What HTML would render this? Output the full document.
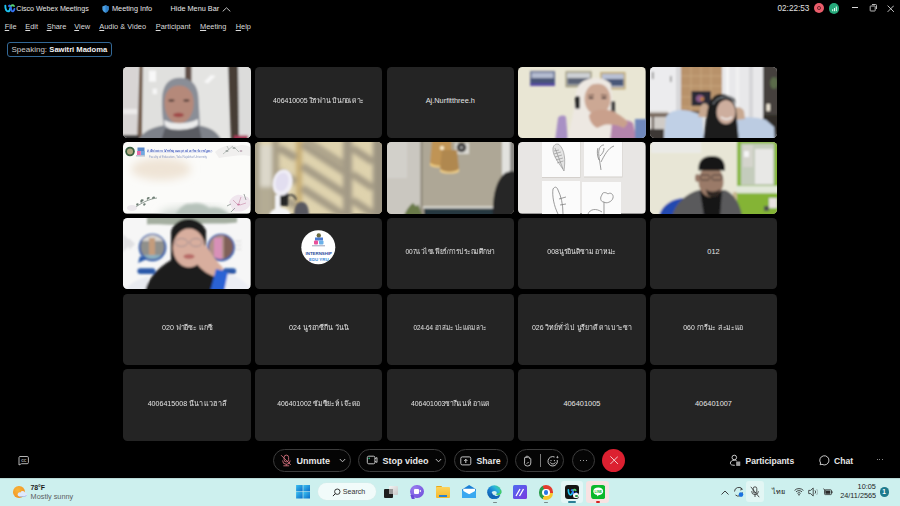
<!DOCTYPE html>
<html><head><meta charset="utf-8">
<style>
*{margin:0;padding:0;box-sizing:border-box}
html,body{width:900px;height:506px;overflow:hidden;background:#000}
body{position:relative;font-family:"Liberation Sans",sans-serif;color:#e6e6e6}
.a{position:absolute}
.t{white-space:nowrap}
.tile{position:absolute;width:127.6px;height:71.6px;border-radius:4.5px;background:#242424;overflow:hidden}
.nm{position:absolute;left:0;right:0;top:29.5px;text-align:center;font-size:7.4px;color:#e4e4e4;white-space:nowrap;line-height:10px}
.pill{position:absolute;top:448.6px;height:23.3px;border:1px solid #3c3c3c;border-radius:12px;background:#050505}
.bt{position:absolute;font-size:9px;font-weight:700;color:#e8e8e8;white-space:nowrap;line-height:10px}
.menu span{position:absolute;top:21.7px;font-size:7.4px;color:#dcdcdc;white-space:nowrap;line-height:10px}
.menu u{text-decoration:underline;text-underline-offset:1px}
</style></head><body>

<!-- title bar -->
<svg class="a" style="left:2px;top:1px" width="14" height="13" viewBox="0 0 14 13"><path d="M3.3 4.6 C3.2 8.8 4.6 10.4 6 10.4 C7.3 10.4 8 9 8.3 7" fill="none" stroke="#1ec4f2" stroke-width="1.9" stroke-linecap="round"/><path d="M7 5 C7.6 4.4 8.2 4.4 8.6 5.2 C9 6.4 8.8 8.4 9.6 9.6 C10.6 10.8 12.2 10.2 12.4 8" fill="none" stroke="#3470f0" stroke-width="1.9" stroke-linecap="round"/><path d="M9.2 4.8 C10 4 11.2 4 12 5" fill="none" stroke="#55d070" stroke-width="1.9" stroke-linecap="round"/></svg>
<div class="a t" style="left:16.3px;top:4px;font-size:7.1px;line-height:10px;color:#e8e8e8">Cisco Webex Meetings</div>
<svg class="a" style="left:101.5px;top:5px" width="7" height="8" viewBox="0 0 7 8"><path d="M3.5 0.3 L6.7 1.4 L6.6 4.2 C6.4 6 5 7.2 3.5 7.8 C2 7.2 0.6 6 0.4 4.2 L0.3 1.4 Z" fill="#4a9ee0"/><path d="M3.5 0.3 L6.7 1.4 L6.6 4.2 C6.4 6 5 7.2 3.5 7.8 Z" fill="#2f7fc8"/></svg>
<div class="a t" style="left:112px;top:4.2px;font-size:7.3px;line-height:10px;color:#e8e8e8">Meeting Info</div>
<div class="a t" style="left:170.5px;top:4.2px;font-size:7.3px;line-height:10px;color:#e8e8e8">Hide Menu Bar</div>
<svg class="a" style="left:222px;top:7.2px" width="9" height="5" viewBox="0 0 9 5"><path d="M0.7 4.4 L4.5 0.8 L8.3 4.4" fill="none" stroke="#d8d8d8" stroke-width="0.9"/></svg>

<div class="a t" style="left:777.5px;top:4px;font-size:8.2px;line-height:10px;color:#e0e0e0">02:22:53</div>
<div class="a" style="left:814px;top:3.2px;width:10.2px;height:10.2px;border-radius:50%;background:#ea5d6b"></div>
<div class="a" style="left:817.2px;top:6.4px;width:3.8px;height:3.8px;border-radius:50%;border:1px solid #6a2028"></div>
<div class="a" style="left:828.5px;top:3.2px;width:10.4px;height:10.4px;border-radius:50%;background:#25a97a"></div>
<svg class="a" style="left:830.5px;top:5px" width="7" height="7" viewBox="0 0 7 7"><rect x="1.2" y="4.2" width="1" height="2" fill="#e8fff4"/><rect x="3" y="3" width="1" height="3.2" fill="#e8fff4"/><rect x="4.8" y="1.5" width="1" height="4.7" fill="#e8fff4"/></svg>
<div class="a" style="left:852.4px;top:7.3px;width:6px;height:0.8px;background:#d8d8d8"></div>
<svg class="a" style="left:869px;top:3px" width="9" height="9" viewBox="0 0 9 9"><rect x="1.2" y="3" width="5" height="5" rx="0.5" fill="none" stroke="#d8d8d8" stroke-width="0.85"/><path d="M3 1.5 H6.6 A0.9 0.9 0 0 1 7.5 2.4 V6" fill="none" stroke="#d8d8d8" stroke-width="0.85"/></svg>
<svg class="a" style="left:886.5px;top:4.5px" width="7.5" height="7.5" viewBox="0 0 7.5 7.5"><path d="M0.6 0.6 L6.9 6.9 M6.9 0.6 L0.6 6.9" stroke="#d8d8d8" stroke-width="0.9"/></svg>

<!-- menu -->
<div class="menu">
<span style="left:4.7px"><u>F</u>ile</span>
<span style="left:25.3px"><u>E</u>dit</span>
<span style="left:46.7px"><u>S</u>hare</span>
<span style="left:74.3px"><u>V</u>iew</span>
<span style="left:99.3px"><u>A</u>udio &amp; Video</span>
<span style="left:155.7px"><u>P</u>articipant</span>
<span style="left:200px"><u>M</u>eeting</span>
<span style="left:235.7px"><u>H</u>elp</span>
</div>

<!-- speaking -->
<div class="a" style="left:6.9px;top:42.3px;width:104.8px;height:15.1px;border:1px solid #336896;border-radius:3px"></div>
<div class="a t" style="left:11.5px;top:45px;font-size:8px;line-height:10px;color:#cfcfcf">Speaking: <span style="color:#f2f2f2;font-weight:700;font-size:7.6px">Sawitri Madoma</span></div>

<!-- GRID -->
<div id="grid">
<div class="tile" style="left:123.3px;top:66.7px" id="t00"><svg width="127.6" height="71.6" viewBox="0 0 127.6 71.6" style="position:absolute;left:0;top:0"><defs><filter id="b0" x="-10%" y="-10%" width="120%" height="120%"><feGaussianBlur stdDeviation="0.9"/></filter></defs><rect width="127.6" height="71.6" fill="#dfdfdd"/><g filter="url(#b0)"><rect x="-2" y="-2" width="17" height="76" fill="#d8d5d4"/><rect x="0" y="42" width="14" height="5" fill="#ecebea"/><rect x="20" y="-2" width="42" height="76" fill="#e0e0de"/><rect x="68" y="-2" width="37" height="76" fill="#e4e4e2"/><rect x="115" y="-2" width="15" height="76" fill="#dcdcdb"/><path d="M16.5 -2 H20 L18.8 74 H14.2 Z" fill="#735e50"/><rect x="26" y="3.6" width="7" height="11" fill="#f8f8f8"/><rect x="29.6" y="21.6" width="4.4" height="5.6" fill="#f6f6f6"/><path d="M81 15 L88 8 L92.5 9 L85 16.6 Z" fill="#f8f8f8"/><path d="M62 -2 H68.5 L68.5 16 H62 Z" fill="#5e4e44"/><path d="M105 -2 H115 L116 74 H108 Z" fill="#463c36"/><path d="M15 74 C20 64 30 60 40 58.5 L76 58.5 C86 60 94 64 99 74 Z" fill="#7e828a"/><path d="M57 10.8 C46 10.8 39.5 18 39 32 C38.6 44 40 56 42 64 L77 64 C77 52 76 42 75.5 31 C75 18 68 10.8 57 10.8 Z" fill="#8a8e97"/><path d="M56 18.5 C48 18.5 42 24 41.5 34 C41 46 47 56.5 56 56.5 C65 56.5 71 47 70.7 35 C70.5 24 64 18.5 56 18.5 Z" fill="#b5897a"/><path d="M43 26 C46 20 52 17.5 57 17.5 C63 17.5 68 20 70.5 26 L70.5 20 C66 13 47 13 43 20 Z" fill="#8a8e97"/><ellipse cx="55.5" cy="48" rx="5.5" ry="2.2" fill="#a04a48"/><ellipse cx="48.5" cy="33.5" rx="3.2" ry="1.1" fill="#3a2a28"/><ellipse cx="63.5" cy="33.5" rx="3.2" ry="1.1" fill="#3a2a28"/><path d="M41 53 C48 57 64 58 75 52 L75 58 C68 62 62 64 57 64 C50 64 45 61 42 58.5 Z" fill="#ebebeb"/><path d="M42 61 C48 63.5 66 63.5 76 59 L79 74 H38 Z" fill="#5a5c62"/><rect x="111" y="68.5" width="14" height="5" fill="#a83858"/><rect x="-2" y="68" width="18" height="6" fill="#3a3a3a"/></g></svg></div>
<div class="tile" style="left:254.9px;top:66.7px"><div class="nm"><span style="display:inline-block;transform:scaleX(0.939)">406410005 อิรฟาน บินกอเดาะ</span></div></div>
<div class="tile" style="left:386.5px;top:66.7px"><div class="nm"><span>Aj.Nurfitthree.h</span></div></div>
<div class="tile" style="left:518.1px;top:66.7px" id="t03"><svg width="127.6" height="71.6" viewBox="0 0 127.6 71.6" style="position:absolute;left:0;top:0"><defs><filter id="b3" x="-10%" y="-10%" width="120%" height="120%"><feGaussianBlur stdDeviation="0.9"/></filter></defs><rect width="127.6" height="71.6" fill="#e9e6d4"/><g filter="url(#b3)"><rect x="12.3" y="4.3" width="24.5" height="14.5" fill="#3a4878"/><rect x="13.5" y="5.5" width="22" height="6" fill="#b4bcd0"/><rect x="13.5" y="11" width="22" height="5" fill="#4a5478"/><rect x="12.3" y="16.5" width="24.5" height="2.3" fill="#5a48a8"/><rect x="47.6" y="4.3" width="26" height="15.9" fill="#9a9478"/><rect x="49" y="5.8" width="23" height="12.5" fill="#cdd0d4"/><rect x="49.5" y="11" width="22" height="6.5" fill="#5a6274"/><rect x="82.3" y="5" width="25.2" height="17.4" fill="#c0aa78"/><rect x="84" y="6.8" width="21.8" height="13.6" fill="#b8c0d4"/><rect x="84.5" y="12" width="21" height="7" fill="#4a5878"/><path d="M37 74 L40 51 C42 48 46 48 48 50 L50 74 Z" fill="#a890c4"/><path d="M49 74 C52 60 56 46 57.5 30 C58.5 18 64 11.5 76 11.5 C87 11.5 93 18 94 28 L96 50 L97 74 Z" fill="#ede8e2"/><ellipse cx="79.5" cy="32" rx="13" ry="16" fill="#cca894"/><path d="M65 25 C68 15 88 13 93 25 L93 17 C86 9 70 9 65 17 Z" fill="#ede8e2"/><path d="M70 28.5 L76 28 M83 28 L89 28.5" stroke="#5a4038" stroke-width="1"/><ellipse cx="73" cy="31" rx="2.8" ry="0.9" fill="#3a2a2a"/><ellipse cx="86" cy="31" rx="2.8" ry="0.9" fill="#3a2a2a"/><rect x="57" y="29" width="5" height="13" rx="2.5" fill="#2a2a2a"/><rect x="93" y="34" width="4" height="11" rx="2" fill="#404040"/><path d="M96 42 C98 46 98 50 96 52" stroke="#505050" stroke-width="0.8" fill="none"/><path d="M92 74 L94 56 C101 52 110 52 115 56 L119 74 Z" fill="#b484ac"/><path d="M71 48 C76 42 88 41 96 45 C102 48 108 52 110 56 L106 61 C100 58 92 57 86 58 L79 61 C74 58 71 53 71 48 Z" fill="#c9a08c"/><rect x="117" y="52" width="12" height="22" fill="#7088bc"/></g></svg></div>
<div class="tile" style="left:649.7px;top:66.7px" id="t04"><svg width="127.6" height="71.6" viewBox="0 0 127.6 71.6" style="position:absolute;left:0;top:0"><defs><filter id="b4" x="-10%" y="-10%" width="120%" height="120%"><feGaussianBlur stdDeviation="1"/></filter></defs><rect width="127.6" height="71.6" fill="#e0e0e0"/><g filter="url(#b4)"><rect x="-2" y="-2" width="33" height="76" fill="#ececee"/><rect x="2" y="5" width="1.5" height="7" fill="#7a7a7a"/><rect x="20" y="9" width="1.5" height="6" fill="#8a8a8a"/><rect x="26" y="-2" width="5" height="48" fill="#d8d8da"/><rect x="-2" y="44" width="20" height="30" fill="#d0ccc8"/><rect x="-2" y="46" width="22" height="4" fill="#7a6a5e"/><rect x="2" y="50" width="2" height="16" fill="#5a4a40"/><rect x="-2" y="62" width="16" height="12" fill="#3e3834"/><rect x="31" y="-2" width="41" height="48" fill="#b8926a"/><path d="M31 9 H72 M31 19 H72 M31 30 H72 M31 40 H72 M41 -2 V46 M51 -2 V46 M61 -2 V46" stroke="#d0ae86" stroke-width="0.7"/><rect x="41.5" y="24" width="19.5" height="15" fill="#2c2c36"/><ellipse cx="50" cy="31.5" rx="4" ry="3.5" fill="#8a5a8a"/><ellipse cx="52" cy="32" rx="2" ry="2" fill="#c08040"/><rect x="31" y="44" width="20" height="10" fill="#6a5a4a"/><rect x="72" y="-2" width="41" height="76" fill="#e8e8ea"/><rect x="76" y="-2" width="3" height="76" fill="#f6f6f6"/><rect x="86" y="-2" width="3" height="76" fill="#f2f2f2"/><rect x="99" y="-2" width="4" height="76" fill="#d6d6d8"/><rect x="113" y="-2" width="17" height="76" fill="#44403c"/><ellipse cx="124" cy="16" rx="4" ry="6" fill="#5a6a48"/><rect x="116.5" y="37" width="3.5" height="7" fill="#f0e8d8"/><rect x="113" y="48" width="17" height="26" fill="#2e2a28"/><path d="M14 74 L16 50 C20 43 30 42 40 44 L52 48 L54 74 Z" fill="#c0d0e6"/><path d="M85 74 L86 52 C95 49 108 50 116 53 L124 60 L125 74 Z" fill="#bccce2"/><path d="M48 50 L51 39 C53 35 57 36 58 39 L59 50 Z" fill="#c8a890"/><path d="M84 42 C87 39 92 40 94 44 L95 52 L86 53 Z" fill="#c8a890"/><path d="M53 74 L57 46 C59 34 63 27 71 27 C79 27 84 33 86 42 L89 74 Z" fill="#1e1e1e"/><ellipse cx="76" cy="45" rx="9.5" ry="12" fill="#cdae9e"/><path d="M65 38 C66 31 72 29 78 30 C82 31 85 34 86 38 L85 32 C80 27 68 27 64 34 Z" fill="#1e1e1e"/><path d="M63 37 C67 30 76 28 84 32" stroke="#a0a6ae" stroke-width="1" fill="none"/><path d="M71 50 C74 53 79 53 82 50" stroke="#f4f4f4" stroke-width="1.5" fill="none"/></g></svg></div>

<div class="tile" style="left:123.3px;top:142.3px" id="t10"><svg width="127.6" height="71.6" viewBox="0 0 127.6 71.6" style="position:absolute;left:0;top:0"><defs><filter id="b10" x="-30%" y="-30%" width="160%" height="160%"><feGaussianBlur stdDeviation="4"/></filter><filter id="b10m" x="-30%" y="-30%" width="160%" height="160%"><feGaussianBlur stdDeviation="1.8"/></filter><filter id="b10s" x="-10%" y="-10%" width="120%" height="120%"><feGaussianBlur stdDeviation="0.6"/></filter></defs><rect width="127.6" height="71.6" fill="#fbfbf9"/><ellipse cx="38" cy="27" rx="30" ry="11" fill="#efe4d6" filter="url(#b10)"/><ellipse cx="72" cy="73" rx="36" ry="8" fill="#d0d8d2" filter="url(#b10)"/><path d="M52 74 C56 66 62 61 68 62 C74 60 82 62 86 66 C94 64 102 67 108 74 Z" fill="#b6c2ba" filter="url(#b10m)"/><g filter="url(#b10s)"><circle cx="7" cy="9.5" r="4.8" fill="#3a6040"/><circle cx="7" cy="9.5" r="3" fill="#b0a880"/><rect x="14.5" y="5.5" width="7" height="3.5" fill="#5a88c8"/><rect x="14" y="9" width="3.8" height="4" fill="#e86aa8"/><rect x="18" y="9" width="3.8" height="4" fill="#70a8e0"/><rect x="13" y="13.5" width="9" height="0.8" fill="#8090b0"/><text x="24" y="9.6" font-size="3.6" font-weight="700" fill="#5068c4" font-family="Liberation Sans" textLength="65" lengthAdjust="spacingAndGlyphs">ฝ่ายฝึกประสบการณ์วิชาชีพครู คณะครุศาสตร์ มหาวิทยาลัยราชภัฏยะลา</text><rect x="24" y="10.6" width="65" height="0.35" fill="#b8c4e8"/><text x="26" y="15.6" font-size="3" fill="#8a98c4" font-family="Liberation Sans" textLength="58" lengthAdjust="spacingAndGlyphs">Faculty of Education, Yala Rajabhat University</text><path d="M10 67 C18 61 26 57 34 56" stroke="#6a7a70" stroke-width="0.7" fill="none"/><path d="M18 61 C16 58 19 56 21 58 Z M24 58 C23 55 26 54 27 56 Z M21 64 C19 62 21 60 23 62 Z M29 57 C29 54 32 54 32 56 Z M14 64 C12 62 14 60 16 62 Z" fill="#6e7e74"/><ellipse cx="9" cy="66" rx="5" ry="3" fill="#ece8ec"/><path d="M106 60 C110 52 118 51 121 55 C125 53 128 58 127 63 C125 68 118 71 110 69 Z" fill="#f0e6ee"/><path d="M114 62 L110 58 M116 61 L118 55 M117 63 L123 61" stroke="#d0a0b8" stroke-width="0.8"/><ellipse cx="115.5" cy="62.5" rx="1.5" ry="1" fill="#c87aa0"/><path d="M121 52 L123 58 M108 70 L112 66 M104 64 L108 62" stroke="#7a8480" stroke-width="0.7"/><path d="M92 10 C98 4 108 2 114 4 C118 2 124 3 127 5 L127 14 C120 12 108 14 96 16 Z" fill="#f0efee"/><path d="M100 12 L110 4 M106 8 L104 4 M112 6 L116 10" stroke="#9aa4a0" stroke-width="0.6"/><ellipse cx="104" cy="9" rx="1.6" ry="0.8" fill="#8a9490"/><ellipse cx="111" cy="6" rx="1.6" ry="0.8" fill="#8a9490"/><ellipse cx="118" cy="9" rx="1.4" ry="0.8" fill="#b098a8"/></g></svg></div>
<div class="tile" style="left:254.9px;top:142.3px" id="t11"><svg width="127.6" height="71.6" viewBox="0 0 127.6 71.6" style="position:absolute;left:0;top:0"><defs><filter id="b11" x="-10%" y="-10%" width="120%" height="120%"><feGaussianBlur stdDeviation="2"/></filter><filter id="b11s" x="-10%" y="-10%" width="120%" height="120%"><feGaussianBlur stdDeviation="0.8"/></filter></defs><rect width="127.6" height="71.6" fill="#dfd3ae"/><g filter="url(#b11)"><rect x="-4" y="-4" width="9" height="80" fill="#a8a08a"/><rect x="5" y="3" width="12" height="42" fill="#dcd8ca"/><rect x="4" y="45" width="14" height="30" fill="#b4ac94"/><rect x="17" y="-4" width="7" height="80" fill="#aaa088"/><rect x="41" y="-4" width="6" height="80" fill="#c8ae74"/><rect x="88" y="-4" width="9" height="80" fill="#a39a86"/><rect x="118" y="-4" width="14" height="80" fill="#9c9482"/><path d="M47 2 L90 30 M47 24 L90 52 M47 46 L90 74 M97 6 L118 20 M97 32 L118 46 M97 58 L118 72 M24 6 L41 16 M24 30 L41 40 M24 54 L41 64" stroke="#a69c86" stroke-width="7.5"/><path d="M47 -6 L90 22" stroke="#a69c86" stroke-width="4"/></g><g filter="url(#b11s)"><rect x="20" y="53" width="6" height="14" fill="#f2f2f6"/><path d="M14 74 C15 68 20 66 26 66 C31 66 35 68 36 74 Z" fill="#f4f4f6"/><rect x="25" y="50" width="8" height="14" fill="#262626"/><path d="M32 54 C36 52 40 53 41 58" stroke="#2a2a2a" stroke-width="1.6" fill="none"/><ellipse cx="27.5" cy="40.5" rx="10" ry="13.5" transform="rotate(14 27.5 40.5)" fill="#f0eef6"/><ellipse cx="27" cy="40" rx="6.5" ry="9.5" transform="rotate(14 27 40)" fill="#e2def0"/><path d="M39 74 C39 64 42 60 46.5 60 C51 60 54 64 54 74 Z" fill="#585860"/></g></svg></div>
<div class="tile" style="left:386.5px;top:142.3px" id="t12"><svg width="127.6" height="71.6" viewBox="0 0 127.6 71.6" style="position:absolute;left:0;top:0"><defs><filter id="b12" x="-10%" y="-10%" width="120%" height="120%"><feGaussianBlur stdDeviation="1"/></filter></defs><rect width="127.6" height="71.6" fill="#aea796"/><g filter="url(#b12)"><rect x="-2" y="-2" width="36" height="76" fill="#cac7c0"/><rect x="-2" y="-2" width="22" height="38" fill="#d2d0ca"/><rect x="33.5" y="-2" width="2" height="76" fill="#8a8474"/><rect x="36" y="-2" width="79" height="76" fill="#aea796"/><rect x="115" y="-2" width="9" height="76" fill="#e2e2de"/><rect x="123" y="-2" width="7" height="45" fill="#8c8a86"/><rect x="68" y="1" width="14" height="11" fill="#dcdad4"/><circle cx="74.5" cy="5.5" r="4.8" fill="#383838"/><circle cx="74.5" cy="5.5" r="1.6" fill="#a8a8a8"/><path d="M45 -2 H64 L65.5 21 C65 25 44 25 43 21 Z" fill="#c09454"/><path d="M43 20 C44 25 65 25 65.5 20 L65.5 23 C65 26.5 44 26.5 43 23 Z" fill="#f0cc80"/><path d="M55 8 H70 L72 27 C71 31 54 31 53 27 Z" fill="#b08850"/><path d="M53 26 C54 31 71 31 72 26 L72 29 C71 32.5 54 32.5 53 29 Z" fill="#f2d088"/><circle cx="55" cy="6" r="2" fill="#fff2d0"/><rect x="36" y="64.5" width="74" height="2" fill="#e6e6e2"/><rect x="37" y="66.5" width="73" height="8" fill="#263840"/><path d="M17 74 C19 68 23 63 26 61 C28 63 30 66 31 62 C33 66 34 70 35 74 Z" fill="#6a7a4a"/><path d="M106 74 C105 54 109 38 118 31 C122 29 126 29 130 30 V74 Z" fill="#262626"/></g></svg></div>
<div class="tile" style="left:518.1px;top:142.3px" id="t13"><svg width="127.6" height="71.6" viewBox="0 0 127.6 71.6" style="position:absolute;left:0;top:0"><defs><filter id="b13" x="-10%" y="-10%" width="120%" height="120%"><feGaussianBlur stdDeviation="0.6"/></filter></defs><rect width="127.6" height="71.6" fill="#e8e6e4"/><g filter="url(#b13)"><rect x="24" y="-2" width="38.5" height="38" fill="#d4d0cc"/><rect x="24" y="-2" width="38" height="37" fill="#fbfbfb"/><rect x="66" y="-2" width="38.5" height="37.5" fill="#d4d0cc"/><rect x="66" y="-2" width="38" height="36.5" fill="#fbfbfb"/><rect x="24" y="39" width="38" height="35" fill="#fbfbfb"/><rect x="64" y="40" width="39" height="34" fill="#fbfbfb"/><path d="M46 29 C42 22 34 14 35 6 C36 2 39 1.5 41 2.5 C47 8 47.5 18 46 29 Z" fill="#e4e4e4" stroke="#8a8a8a" stroke-width="0.6"/><path d="M37 6 L45 27 M36 9 L41 8 M36 12 L43 10 M37 15 L44 13 M38 18 L45 16 M39 21 L45.5 19" stroke="#7a7a7a" stroke-width="0.5"/><path d="M83 28 C82 20 80 12 81 8 C82 4 84 3 86 3 M83 20 C86 14 90 6 96 4 M81 18 C79 14 79 8 80 6 M82 14 C84 12 86 10 86 6" fill="none" stroke="#7a7a7a" stroke-width="0.75"/><path d="M35 47 C37 44 39 45 40 48 C43 54 45 62 45 72 M35 47 C34 54 36 64 40 72 M41 57 L48 55 M42 63 L48 62" fill="none" stroke="#7a7a7a" stroke-width="0.75"/><path d="M86 72 V60 M84 53 C84 50 88 50 90 52 C92 50 96 52 95 56 C94 60 88 62 86 60 C82 60 82 55 84 53 Z M70 72 C72 67 78 66 84 70" fill="none" stroke="#7a7a7a" stroke-width="0.75"/></g></svg></div>
<div class="tile" style="left:649.7px;top:142.3px" id="t14"><svg width="127.6" height="71.6" viewBox="0 0 127.6 71.6" style="position:absolute;left:0;top:0"><defs><filter id="b14" x="-10%" y="-10%" width="120%" height="120%"><feGaussianBlur stdDeviation="1"/></filter></defs><rect width="127.6" height="71.6" fill="#e2dfcc"/><g filter="url(#b14)"><rect x="-2" y="-2" width="89" height="76" fill="#e8e6d6"/><rect x="1" y="-2" width="50" height="13" fill="#eaeae6"/><rect x="87" y="-2" width="43" height="76" fill="#88b83c"/><rect x="91" y="1.5" width="33" height="42" fill="#c4ccbc"/><rect x="93" y="3" width="10" height="22" fill="#d4d4cc"/><rect x="94" y="9" width="5" height="6" fill="#f4f4f4"/><rect x="105" y="7" width="18" height="35" fill="#e8e8e6"/><rect x="86" y="44" width="44" height="7.5" fill="#e2e8da"/><rect x="86" y="51.5" width="44" height="22" fill="#84b436"/><rect x="119" y="56" width="8" height="10" fill="#e8e2e0"/><rect x="114" y="64" width="5" height="5" fill="#505050"/><rect x="83" y="50" width="4" height="24" fill="#c8b890"/><path d="M9 74 C12 63 22 56 36 56 L38 74 Z" fill="#2448b0"/><path d="M22 74 C25 62 36 51 49 48 L75 48 C84 51 90 62 92 74 Z" fill="#5a5a5c"/><path d="M50 49 L72 49 L70 74 L54 74 Z" fill="#161616"/><ellipse cx="61" cy="39.5" rx="12.5" ry="15.5" fill="#9a7a68"/><ellipse cx="47.5" cy="36" rx="2.5" ry="4" fill="#967666"/><path d="M48.5 28.5 C47.5 18 54 14 62 14 C70 14 75.5 18 75 28.5 Z" fill="#181818"/><rect x="50.5" y="33" width="9" height="5" rx="1.5" fill="none" stroke="#4a3a34" stroke-width="1"/><rect x="62" y="33" width="10" height="5" rx="1.5" fill="none" stroke="#4a3a34" stroke-width="1"/><path d="M56 47 C58 50 66 51 70 47 L69 53 C66 56 59 56 57 52 Z" fill="#2e2624"/></g></svg></div>

<div class="tile" style="left:123.3px;top:217.9px" id="t20"><svg width="127.6" height="71.6" viewBox="0 0 127.6 71.6" style="position:absolute;left:0;top:0"><defs><filter id="b20" x="-10%" y="-10%" width="120%" height="120%"><feGaussianBlur stdDeviation="0.9"/></filter></defs><rect width="127.6" height="71.6" fill="#f6f6f6"/><g filter="url(#b20)"><path d="M24 -2 H114 V4.5 C100 6.5 80 4.5 60 6.5 C45 7.5 35 5.5 24 6.5 Z" fill="#a4aea0"/><path d="M0 16 L9 25 L0 34 Z M6 20 L12 26 L6 32 Z" fill="#e0e0e2"/><circle cx="29.5" cy="29.5" r="13.8" fill="#2a58a8"/><path d="M17 38 L15 45 L24 41 Z" fill="#2a58a8"/><clipPath id="c20a"><circle cx="29.5" cy="29" r="12"/></clipPath><clipPath id="c20b"><circle cx="98" cy="29" r="12"/></clipPath><g clip-path="url(#c20a)"><rect x="17" y="17" width="25" height="25" fill="#90908c"/><rect x="17" y="17" width="25" height="6" fill="#d8d4d0"/><rect x="26" y="20" width="6" height="21" fill="#c49c7c"/><rect x="17" y="37" width="25" height="5" fill="#8ab0c0"/></g><circle cx="98" cy="29.5" r="13.8" fill="#2a58a8"/><g clip-path="url(#c20b)"><rect x="85" y="17" width="26" height="25" fill="#b09088"/><rect x="91" y="20" width="8" height="22" fill="#d890b8"/><rect x="101" y="17" width="10" height="25" fill="#806058"/></g><rect x="14.4" y="50.2" width="18" height="5.8" rx="2.9" fill="#2a58a8"/><rect x="99.6" y="50.2" width="13.5" height="5.8" rx="2.9" fill="#2a58a8"/><circle cx="114" cy="23" r="0.6" fill="#909090"/><circle cx="117" cy="23" r="0.6" fill="#909090"/><circle cx="114" cy="27" r="0.6" fill="#909090"/><circle cx="117" cy="27" r="0.6" fill="#909090"/><circle cx="114" cy="31" r="0.6" fill="#909090"/><circle cx="117" cy="31" r="0.6" fill="#909090"/><path d="M2 74 C5 66 14 61 25 59 L25 74 Z" fill="#e8eaf0"/><path d="M100 74 L102 55 C110 56 121 62 127 70 V74 Z" fill="#eceef4"/><path d="M22 74 C24 62 34 50 48 42 L48 14 C50 5 58 1 66 1 C74 1 81 6 83 14 L83 46 C90 52 97 60 99 74 Z" fill="#1c1c1c"/><ellipse cx="66" cy="30" rx="16" ry="19.5" fill="#d8ae9e"/><path d="M49 22 C50 12 57 8 66 8 C75 8 82 12 83 22 L83 12 C78 4 54 4 49 12 Z" fill="#1c1c1c"/><ellipse cx="58.5" cy="24.5" rx="6.2" ry="4" fill="none" stroke="#9a8a8e" stroke-width="0.9"/><ellipse cx="73" cy="24.5" rx="6.2" ry="4" fill="none" stroke="#9a8a8e" stroke-width="0.9"/><ellipse cx="66" cy="38.5" rx="5.5" ry="2.4" fill="#b86c68"/><path d="M74 46 C76 40 78 30 81 27 C85 28 90 40 100 50 L96 60 C88 58 79 53 74 46 Z" fill="#d8ae9e"/><path d="M87 74 L93 51 L105 54 L101 74 Z" fill="#2a62d4"/></g></svg></div>
<div class="tile" style="left:254.9px;top:217.9px" id="t21"><svg width="127.6" height="71.6" viewBox="0 0 127.6 71.6" style="position:absolute;left:0;top:0"><circle cx="63.3" cy="29.2" r="17" fill="#ffffff"/><circle cx="63.8" cy="17.5" r="2.2" fill="#6a6a40"/><rect x="60" y="19.5" width="8" height="3" fill="#4a7ad0"/><rect x="59" y="22.5" width="4" height="4" rx="1" fill="#e8509a"/><rect x="64" y="22.5" width="4.5" height="4" rx="1" fill="#6ab0e8"/><rect x="57" y="27.3" width="13" height="1" fill="#9aa0b8"/><text x="63.8" y="37.2" font-size="4.4" font-weight="700" text-anchor="middle" fill="#2a4a9a" font-family="Liberation Sans">INTERNSHIP</text><text x="63.8" y="43" font-size="4.4" font-weight="700" text-anchor="middle" fill="#3a8ad8" font-family="Liberation Sans">EDU YRU</text></svg></div>
<div class="tile" style="left:386.5px;top:217.9px"><div class="nm"><span style="display:inline-block;transform:scaleX(0.892)">007แวไซเฟียร์/การประถมศึกษา</span></div></div>
<div class="tile" style="left:518.1px;top:217.9px"><div class="nm"><span style="display:inline-block;transform:scaleX(0.936)">008นูรอินติซาม อาหมะ</span></div></div>
<div class="tile" style="left:649.7px;top:217.9px"><div class="nm"><span>012</span></div></div>

<div class="tile" style="left:123.3px;top:293.5px"><div class="nm"><span style="display:inline-block;transform:scaleX(0.963)">020 ฟาอีซะ แกซี</span></div></div>
<div class="tile" style="left:254.9px;top:293.5px"><div class="nm"><span style="display:inline-block;transform:scaleX(0.967)">024 นูรอาซีกีน วันนิ</span></div></div>
<div class="tile" style="left:386.5px;top:293.5px"><div class="nm"><span style="display:inline-block;transform:scaleX(0.850)">024-64 อาสมะ ปะแดมลาะ</span></div></div>
<div class="tile" style="left:518.1px;top:293.5px"><div class="nm"><span style="display:inline-block;transform:scaleX(0.945)">026 วิทย์ทั่วไป นูรียาดี ดาเบาะซา</span></div></div>
<div class="tile" style="left:649.7px;top:293.5px"><div class="nm"><span style="display:inline-block;transform:scaleX(0.931)">060 การีมะ สะมะแอ</span></div></div>

<div class="tile" style="left:123.3px;top:369.1px"><div class="nm"><span style="display:inline-block;transform:scaleX(0.960)">4006415008 นีนา แวฮาลี</span></div></div>
<div class="tile" style="left:254.9px;top:369.1px"><div class="nm"><span style="display:inline-block;transform:scaleX(0.927)">406401002 ซัมซียะห์ เจ๊ะดอ</span></div></div>
<div class="tile" style="left:386.5px;top:369.1px"><div class="nm"><span style="display:inline-block;transform:scaleX(0.931)">406401003ซากีแนห์ อาแด</span></div></div>
<div class="tile" style="left:518.1px;top:369.1px"><div class="nm"><span>406401005</span></div></div>
<div class="tile" style="left:649.7px;top:369.1px"><div class="nm"><span>406401007</span></div></div>
</div>

<!-- bottom controls -->
<svg class="a" style="left:17px;top:455px" width="13" height="11" viewBox="0 0 13 11"><path d="M2.6 1.5 H10.2 A1.2 1.2 0 0 1 11.4 2.7 V7.5 A1.2 1.2 0 0 1 10.2 8.7 H4.5 L2 10 V2.7 A1.2 1.2 0 0 1 2.6 1.5 Z" fill="none" stroke="#c8c8c8" stroke-width="0.9"/><text x="6.8" y="6.6" font-size="3.6" text-anchor="middle" fill="#c8c8c8" font-family="Liberation Sans" font-weight="700">CC</text></svg>

<div class="pill" style="left:272.6px;width:78.2px"></div>
<div class="pill" style="left:358.4px;width:88px"></div>
<div class="pill" style="left:453.9px;width:54.3px"></div>
<div class="pill" style="left:515.1px;width:49.4px"></div>
<div class="pill" style="left:571.5px;width:23.6px"></div>
<div class="a" style="left:602.1px;top:448.6px;width:23.3px;height:23.3px;border-radius:50%;background:#dc2030"></div>
<svg class="a" style="left:609.5px;top:456.2px" width="8.4" height="8.4" viewBox="0 0 8.4 8.4"><path d="M0.4 0.4 L8 8 M8 0.4 L0.4 8" stroke="#f4dcdc" stroke-width="0.9"/></svg>

<div class="bt" style="left:296.5px;top:455.5px">Unmute</div>
<div class="bt" style="left:382.5px;top:455.5px">Stop video</div>
<div class="bt" style="left:476.5px;top:455.5px;font-size:8.7px">Share</div>
<div class="bt" style="left:745.5px;top:455.5px;font-size:8.5px">Participants</div>
<div class="bt" style="left:834px;top:455.5px;font-size:8.6px">Chat</div>



<!-- control icons -->
<svg class="a" style="left:280px;top:454px" width="12" height="13" viewBox="0 0 12 13"><rect x="4.1" y="1.1" width="4.5" height="6.8" rx="2.25" fill="none" stroke="#d4707e" stroke-width="0.9"/><path d="M2.6 6.5 A3.8 3.8 0 0 0 10.2 6.5 M6.4 10.3 V11.6 M3.4 11.8 H9.2" fill="none" stroke="#d4707e" stroke-width="0.9"/><path d="M1.1 1.2 L10.8 10.9" stroke="#d4707e" stroke-width="0.9"/></svg>
<svg class="a" style="left:339px;top:458px" width="7" height="5" viewBox="0 0 7 5"><path d="M0.8 1 L3.5 3.8 L6.2 1" fill="none" stroke="#cfcfcf" stroke-width="0.9"/></svg>
<svg class="a" style="left:366px;top:455px" width="12" height="10" viewBox="0 0 12 10"><rect x="1.3" y="1.2" width="7.6" height="7.6" rx="1.4" fill="none" stroke="#d8d8d8" stroke-width="0.9"/><path d="M9 3.6 L11 2.6 V7.4 L9 6.4" fill="none" stroke="#d8d8d8" stroke-width="0.9"/><circle cx="3.2" cy="3.4" r="0.8" fill="#22b07a"/></svg>
<svg class="a" style="left:435px;top:458px" width="7" height="5" viewBox="0 0 7 5"><path d="M0.8 1 L3.5 3.8 L6.2 1" fill="none" stroke="#cfcfcf" stroke-width="0.9"/></svg>
<svg class="a" style="left:460px;top:455.5px" width="12" height="10" viewBox="0 0 12 10"><rect x="0.8" y="0.9" width="10" height="8" rx="1.5" fill="none" stroke="#d8d8d8" stroke-width="0.9"/><path d="M5.8 7 V3.5 M4.2 5 L5.8 3.3 L7.4 5" fill="none" stroke="#e8e8e8" stroke-width="0.9"/></svg>
<svg class="a" style="left:523px;top:454.5px" width="9" height="12" viewBox="0 0 9 12"><path d="M1.6 6 V3 A0.8 0.8 0 0 1 3.2 3 V1.8 A0.8 0.8 0 0 1 4.8 1.8 V2.6 A0.8 0.8 0 0 1 6.4 2.6 V3.6 A0.8 0.8 0 0 1 7.8 3.8 V8 A3 3 0 0 1 4.8 11 H4.2 A2.8 2.8 0 0 1 1.4 8.4 Z" fill="none" stroke="#d8d8d8" stroke-width="0.85"/><path d="M3.6 8.8 C4.2 7.6 5.4 7.2 6 7.6" fill="none" stroke="#d8d8d8" stroke-width="0.7"/></svg>
<div class="a" style="left:539.8px;top:454px;width:0.8px;height:12.5px;background:#7a7a7a"></div>
<svg class="a" style="left:546.5px;top:454.5px" width="13" height="12" viewBox="0 0 13 12"><path d="M10.2 5 A4.7 4.7 0 1 1 7.6 2" fill="none" stroke="#d8d8d8" stroke-width="0.9"/><circle cx="4" cy="5.6" r="0.6" fill="#d8d8d8"/><circle cx="7.4" cy="5.6" r="0.6" fill="#d8d8d8"/><path d="M3.2 7.4 C4.2 9.4 7.4 9.4 8.4 7.4" fill="none" stroke="#d8d8d8" stroke-width="0.9"/><path d="M10.4 0.6 L10.8 1.8 L12 2.2 L10.8 2.6 L10.4 3.8 L10 2.6 L8.8 2.2 L10 1.8 Z" fill="#d8d8d8"/></svg>
<div class="a" style="left:579.8px;top:459.6px;width:1.3px;height:1.3px;border-radius:50%;background:#d0d0d0"></div>
<div class="a" style="left:582.7px;top:459.6px;width:1.3px;height:1.3px;border-radius:50%;background:#d0d0d0"></div>
<div class="a" style="left:585.6px;top:459.6px;width:1.3px;height:1.3px;border-radius:50%;background:#d0d0d0"></div>
<svg class="a" style="left:729px;top:454px" width="13" height="13" viewBox="0 0 13 13"><circle cx="5.3" cy="3.5" r="2.3" fill="none" stroke="#dcdcdc" stroke-width="0.9"/><path d="M7.6 6.6 C7 6.3 6.2 6.2 5.3 6.2 C3 6.2 1.4 7.4 1.4 9.2 C1.4 10.6 2.6 11.3 5.8 11.3" fill="none" stroke="#dcdcdc" stroke-width="0.9"/><rect x="7.2" y="7.6" width="4" height="4.2" fill="#bcbcbc"/><path d="M7.2 8.6 H11.2 M7.2 9.7 H11.2 M7.2 10.8 H11.2" stroke="#5a5a5a" stroke-width="0.35"/></svg>
<svg class="a" style="left:818px;top:454.5px" width="12" height="12" viewBox="0 0 12 12"><path d="M2.1 9.7 L2.6 8 A4.6 4.6 0 1 1 4 9.3 Z" fill="none" stroke="#dcdcdc" stroke-width="0.9" stroke-linejoin="round"/></svg>
<div class="a" style="left:876.8px;top:459px;width:1.1px;height:1.1px;background:#8a8a8a"></div>
<div class="a" style="left:879.3px;top:459px;width:1.1px;height:1.1px;background:#8a8a8a"></div>
<div class="a" style="left:881.8px;top:459px;width:1.1px;height:1.1px;background:#8a8a8a"></div>

<!-- taskbar -->
<div class="a" style="left:0;top:477.6px;width:900px;height:28.4px;background:#cdf0ee"></div>
<div class="a" style="left:0;top:477.6px;width:900px;height:0.6px;background:#b8d8d6"></div>
<!-- weather -->
<div class="a" style="left:13.3px;top:486.2px;width:11.6px;height:11.6px;border-radius:50%;background:radial-gradient(circle at 40% 35%,#f8b53a,#f08a1c)"></div>
<svg class="a" style="left:17px;top:490px" width="10" height="7" viewBox="0 0 10 7"><path d="M2.2 6.5 H8 A1.9 1.9 0 0 0 8.2 2.7 A2.6 2.6 0 0 0 3.4 2.4 A2 2 0 0 0 2.2 6.5 Z" fill="#dfe9fb"/><path d="M2.2 6.5 H8 A1.9 1.9 0 0 0 9.4 5" fill="none" stroke="#9fb8e8" stroke-width="0.7"/></svg>
<div class="a t" style="left:30.4px;top:484.2px;font-size:6.9px;line-height:8px;font-weight:700;color:#1c1c1c">78°F</div>
<div class="a t" style="left:30.6px;top:492.5px;font-size:7.3px;line-height:8px;color:#5a5e5e">Mostly sunny</div>
<!-- start -->
<svg class="a" style="left:295.7px;top:485.4px" width="14.2" height="13.5" viewBox="0 0 14 13.5"><defs><linearGradient id="wg" x1="0" y1="0" x2="1" y2="1"><stop offset="0" stop-color="#3cc0f0"/><stop offset="1" stop-color="#0a6cc8"/></linearGradient></defs><rect x="0" y="0" width="6.6" height="6.4" fill="url(#wg)"/><rect x="7.2" y="0" width="6.8" height="6.4" fill="url(#wg)"/><rect x="0" y="7" width="6.6" height="6.5" fill="url(#wg)"/><rect x="7.2" y="7" width="6.8" height="6.5" fill="url(#wg)"/></svg>
<!-- search -->
<div class="a" style="left:318.4px;top:483.2px;width:57.3px;height:17.3px;border-radius:9px;background:#f1fbfa;box-shadow:0 0 0 0.5px #d6ecea"></div>
<svg class="a" style="left:331.5px;top:487.5px" width="9" height="9" viewBox="0 0 9 9"><circle cx="5.3" cy="3.7" r="2.7" fill="none" stroke="#202020" stroke-width="0.9"/><path d="M3.4 5.6 L0.9 8.1" stroke="#202020" stroke-width="1"/></svg>
<div class="a t" style="left:342.8px;top:487.6px;font-size:7.1px;line-height:9px;color:#333">Search</div>
<!-- task view -->
<div class="a" style="left:388.5px;top:485.5px;width:9.7px;height:9px;background:linear-gradient(135deg,#f4f4f4,#c8c8c8);border-radius:1px"></div>
<div class="a" style="left:383.7px;top:489px;width:9px;height:9px;background:#1e1e1e;border-radius:1px"></div>
<div class="a" style="left:388.5px;top:489px;width:4.2px;height:5px;background:#9a9a9a"></div>
<!-- teams -->
<div class="a" style="left:410.3px;top:485.2px;width:13.4px;height:13px;border-radius:50%;background:radial-gradient(circle at 35% 30%,#9a7df0,#6a4ad8)"></div>
<div class="a" style="left:411px;top:495.2px;width:3px;height:3.5px;background:#6a4ad8;transform:skewX(20deg)"></div>
<div class="a" style="left:413.5px;top:489.2px;width:5px;height:5px;background:#fff;border-radius:1px"></div>
<div class="a" style="left:418.5px;top:490px;width:0;height:0;border-top:1.7px solid transparent;border-bottom:1.7px solid transparent;border-right:2.5px solid #fff"></div>
<!-- folder -->
<div class="a" style="left:435.9px;top:485.9px;width:6px;height:3px;background:#e8a818;border-radius:1px 1px 0 0"></div>
<div class="a" style="left:435.9px;top:487.4px;width:14.1px;height:10.7px;background:linear-gradient(#fcd35c,#f5b92d);border-radius:1px"></div>
<div class="a" style="left:439px;top:494.5px;width:8px;height:2px;background:#2a82d0"></div>
<!-- mail -->
<svg class="a" style="left:461.7px;top:485px" width="14.3" height="13" viewBox="0 0 14.3 13"><path d="M0 4.5 L7.15 0 L14.3 4.5 V13 H0 Z" fill="#1a7fd6"/><path d="M1.2 3.8 H13.1 V7 L7.15 10 L1.2 7 Z" fill="#ffffff"/><path d="M0 5.3 L7.15 9.3 L14.3 5.3 V13 H0 Z" fill="#3aa8f0"/></svg>
<!-- edge -->
<svg class="a" style="left:487.3px;top:484.8px" width="14.6" height="14.6" viewBox="0 0 14.6 14.6"><defs><linearGradient id="eg" x1="0" y1="1" x2="1" y2="0"><stop offset="0" stop-color="#0a4f9c"/><stop offset="0.45" stop-color="#1a82d4"/><stop offset="0.7" stop-color="#2ab8d8"/><stop offset="1" stop-color="#52d85a"/></linearGradient></defs>
<circle cx="7.3" cy="7.3" r="7.1" fill="url(#eg)"/>
<path d="M14.6 8.6 C13.8 10.6 11.5 11.4 9.8 11.1 C12 11.8 13.2 13.4 12.4 12.8 L14.6 14.6 Z" fill="#cdf0ee"/>
<path d="M8.4 9.2 C10.5 10.2 13 10 14.4 8.6 L14.6 14.6 H11 C12.2 13.8 12.8 12.6 12.6 11.6 C11 12.2 8.6 11.6 7.4 10 Z" fill="#cdf0ee"/>
<ellipse cx="7.3" cy="8" rx="2.6" ry="2.1" fill="#d4f2f0"/>
<path d="M4.6 8.4 C4.8 10.8 6.6 12 8.6 12 C10.6 12 12 11.2 12.8 10.4" fill="none" stroke="#1260b0" stroke-width="1.6"/>
<path d="M9.6 9.3 C11.2 9.6 12.4 9.2 13.2 8.4 C13.8 7.4 13.8 6.2 13.4 5.2" fill="none" stroke="#44cc66" stroke-width="1.6"/>
</svg>
<div class="a" style="left:493.4px;top:501.5px;width:3.6px;height:1.1px;border-radius:1px;background:#7a8a8a"></div>
<!-- purple app -->
<div class="a" style="left:513px;top:485.2px;width:14.1px;height:13.4px;border-radius:1.5px;background:linear-gradient(135deg,#4d6bf0,#7a3ae0)"></div>
<svg class="a" style="left:515px;top:487.5px" width="10" height="9" viewBox="0 0 10 9"><path d="M1 8 L5 1 M4.5 8 L8.5 1" stroke="#fff" stroke-width="1.3"/></svg>
<!-- chrome -->
<div class="a" style="left:538.7px;top:485px;width:14.6px;height:14.6px;border-radius:50%;background:conic-gradient(from -30deg,#e33b2e 0 120deg,#f8c52c 120deg 240deg,#2a9d4a 240deg 360deg)"></div>
<div class="a" style="left:542.4px;top:488.7px;width:7.2px;height:7.2px;border-radius:50%;background:#fff"></div>
<div class="a" style="left:543.6px;top:489.9px;width:4.8px;height:4.8px;border-radius:50%;background:#2a76e4"></div>
<div class="a" style="left:544.2px;top:501.5px;width:3.6px;height:1.1px;border-radius:1px;background:#7a8a8a"></div>
<!-- webex highlighted -->
<div class="a" style="left:560.9px;top:480.8px;width:22.1px;height:22px;border-radius:3px;background:#e4f6f6"></div>
<div class="a" style="left:564.8px;top:485px;width:14px;height:14px;border-radius:3px;background:#141414"></div>
<svg class="a" style="left:565px;top:486px" width="13" height="11" viewBox="0 0 14 13"><path d="M3.3 4.6 C3.2 8.8 4.6 10.4 6 10.4 C7.3 10.4 8 9 8.3 7" fill="none" stroke="#1ec4f2" stroke-width="2" stroke-linecap="round"/><path d="M7 5 C7.6 4.4 8.2 4.4 8.6 5.2 C9 6.4 8.8 8.4 9.6 9.6 C10.6 10.8 12.2 10.2 12.4 8" fill="none" stroke="#3470f0" stroke-width="2" stroke-linecap="round"/><path d="M9.2 4.8 C10 4 11.2 4 12 5" fill="none" stroke="#55d070" stroke-width="2" stroke-linecap="round"/></svg>
<div class="a" style="left:573px;top:493.4px;width:6.4px;height:5px;border-radius:2.2px;background:#f4f4f4"></div>
<div class="a" style="left:574.6px;top:494.8px;width:3.2px;height:2.2px;border-radius:1px;background:#2a9a50"></div>
<div class="a" style="left:567.6px;top:501.2px;width:8.6px;height:1.5px;border-radius:1px;background:#2a7f96"></div>
<!-- line highlighted -->
<div class="a" style="left:586.2px;top:480.8px;width:22.8px;height:22px;border-radius:3px;background:#f8e2e2"></div>
<svg class="a" style="left:590.5px;top:485px" width="14.5" height="14.2" viewBox="0 0 14.5 14.2"><rect width="14.5" height="14.2" rx="3.2" fill="#0ab82a"/><path d="M7.25 2.4 C10.2 2.4 12.2 4.1 12.2 6.3 C12.2 8.4 10.2 10 7.6 10.2 L6 11.6 L6.2 10.1 C3.8 9.8 2.3 8.2 2.3 6.3 C2.3 4.1 4.3 2.4 7.25 2.4 Z" fill="#fff"/><text x="7.25" y="7.6" font-size="3.3" font-weight="700" text-anchor="middle" fill="#0ab82a" font-family="Liberation Sans">LINE</text></svg>
<div class="a" style="left:596.2px;top:501.3px;width:3.8px;height:1.3px;border-radius:1px;background:#d42020"></div>

<!-- tray -->
<svg class="a" style="left:720.5px;top:489.5px" width="8" height="5" viewBox="0 0 8 5"><path d="M0.5 4.5 L4 1 L7.5 4.5" fill="none" stroke="#2a2a2a" stroke-width="0.9"/></svg>
<svg class="a" style="left:733px;top:485.5px" width="12" height="12" viewBox="0 0 12 12"><path d="M1.5 5.5 A4.2 4.2 0 0 1 9 3 M9.5 6.5 A4.2 4.2 0 0 1 2.5 9" fill="none" stroke="#333" stroke-width="0.9"/><path d="M7.5 1.5 L9.5 3.3 L7.2 4" fill="none" stroke="#333" stroke-width="0.8"/><circle cx="8" cy="8.6" r="2.3" fill="#1a72e0"/></svg>
<div class="a" style="left:745.9px;top:480.8px;width:17.9px;height:21.5px;border-radius:3px;background:#e2f6f4"></div>
<svg class="a" style="left:750px;top:485.5px" width="10" height="12" viewBox="0 0 10 12"><rect x="3.2" y="0.8" width="3.6" height="6.2" rx="1.8" fill="none" stroke="#2a2a2a" stroke-width="0.8"/><path d="M1.6 5.2 A3.4 3.4 0 0 0 8.4 5.2 M5 8.6 V11" fill="none" stroke="#2a2a2a" stroke-width="0.8"/><path d="M0.8 0.8 L9.2 11.2" stroke="#2a2a2a" stroke-width="0.8"/></svg>
<div class="a t" style="left:771.5px;top:486.8px;font-size:7.2px;line-height:10px;color:#222">ไทย</div>
<svg class="a" style="left:794.4px;top:487px" width="10" height="9" viewBox="0 0 10 9"><path d="M0.6 3.4 A6.2 6.2 0 0 1 9.4 3.4 M2 4.9 A4.2 4.2 0 0 1 8 4.9 M3.4 6.4 A2.2 2.2 0 0 1 6.6 6.4" fill="none" stroke="#2a2a2a" stroke-width="0.85"/><circle cx="5" cy="7.8" r="0.8" fill="#2a2a2a"/></svg>
<svg class="a" style="left:808.2px;top:487px" width="10" height="10" viewBox="0 0 10 10"><path d="M0.7 3.4 H2.6 L5.2 1 V9 L2.6 6.6 H0.7 Z" fill="none" stroke="#2a2a2a" stroke-width="0.8"/><path d="M7 3.4 A2.3 2.3 0 0 1 7 6.6" fill="none" stroke="#2a2a2a" stroke-width="0.8"/><path d="M8.6 2 A4.3 4.3 0 0 1 8.6 8" fill="none" stroke="#8a9a9a" stroke-width="0.7"/></svg>
<svg class="a" style="left:822.5px;top:487.5px" width="10" height="8" viewBox="0 0 10 8"><rect x="1.5" y="1.8" width="7" height="4.8" rx="0.8" fill="none" stroke="#2a2a2a" stroke-width="0.8"/><rect x="2.3" y="2.6" width="5" height="3.2" fill="#2a2a2a"/><rect x="8.6" y="3.3" width="0.9" height="1.8" fill="#2a2a2a"/><path d="M0.3 0.5 L2.5 2.8" stroke="#2a2a2a" stroke-width="0.9"/></svg>
<div class="a t" style="left:857.6px;top:483px;font-size:7.3px;line-height:8px;color:#1e1e1e">10:05</div>
<div class="a t" style="left:840.2px;top:492.2px;font-size:7.3px;line-height:8px;color:#1e1e1e">24/11/2565</div>
<div class="a" style="left:879.5px;top:487.3px;width:9.6px;height:9.6px;border-radius:50%;background:#1e7a8c"></div>
<div class="a t" style="left:882.3px;top:488.2px;font-size:6.6px;line-height:8px;font-weight:700;color:#fff">1</div>

</body></html>
